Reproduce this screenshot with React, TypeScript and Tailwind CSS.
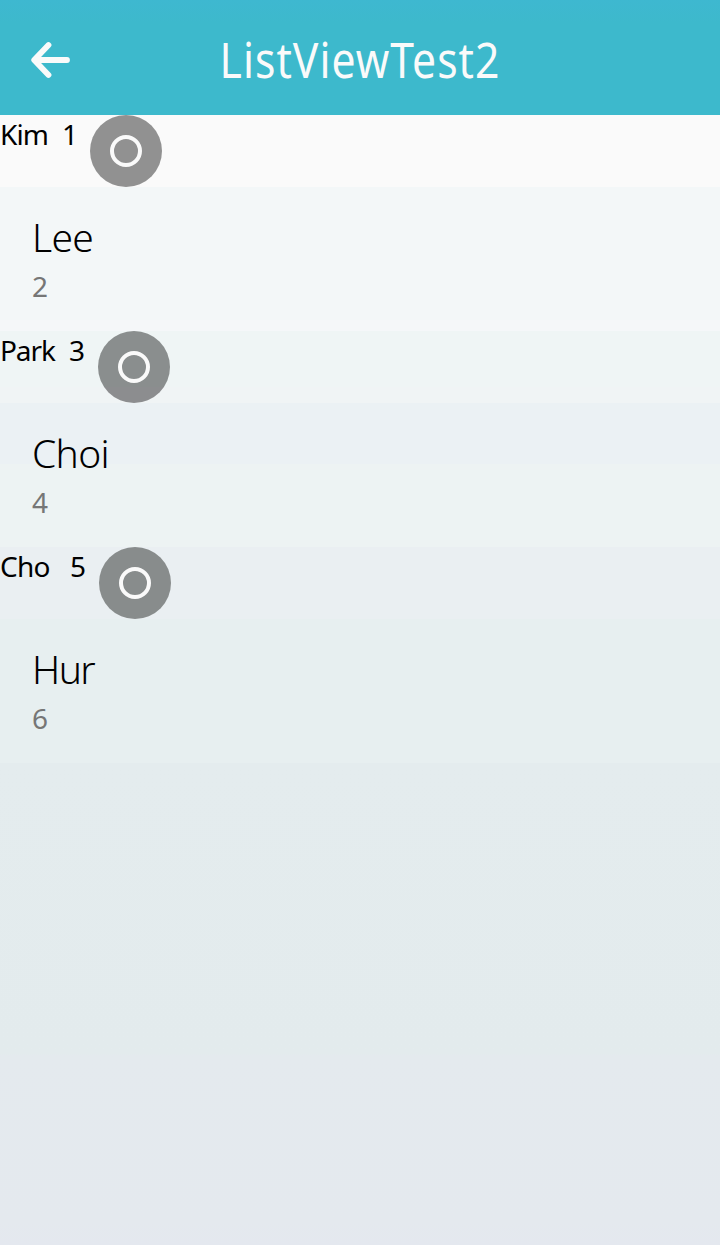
type Row = {
  name: string;
  value: string;
  nameWidth: string;
  valueWidth: string;
  tracking: string;
  background: string;
  disc: string;
};

const checkRow = (row: Row) => (
  <li key={row.name} className={`flex h-[72px] items-start ${row.background}`}>
    <span className={`mt-px whitespace-nowrap text-[28px] leading-9 text-black ${row.nameWidth} ${row.tracking}`}>{row.name}</span>
    <span className={`mt-px text-[28px] leading-9 text-black ${row.valueWidth}`}>{row.value}</span>
    <button
      aria-label={row.name}
      className={`flex size-[72px] shrink-0 items-center justify-center rounded-full ${row.disc}`}
    >
      <span className="size-8 rounded-full border-4 border-[#fafafa]" />
    </button>
  </li>
);

const detailRow = (row: Row) => (
  <li key={row.name} className={`flex h-36 flex-col items-start pl-8 pt-[25px] ${row.background}`}>
    <span className={`text-[39px] font-light leading-[50px] text-black ${row.tracking}`}>{row.name}</span>
    <span className="mt-1.5 text-[28px] leading-9 text-[#767676]">{row.value}</span>
  </li>
);

const rows: Row[] = [
  { name: "Kim", value: "1", nameWidth: "w-[62px]", valueWidth: "w-[28px]", tracking: "tracking-[-0.9px]", background: "bg-[#fafafa]", disc: "bg-[#919191]" },
  { name: "Lee", value: "2", nameWidth: "", valueWidth: "", tracking: "tracking-[-0.7px]", background: "bg-[linear-gradient(#f3f7f8_133px,#f5f7f9_133px)]", disc: "" },
  { name: "Park", value: "3", nameWidth: "w-[69px]", valueWidth: "w-[29px]", tracking: "tracking-[-1.1px]", background: "bg-[linear-gradient(#eff5f5_56px,#f0f4f5_56px)]", disc: "bg-[linear-gradient(#8a8e8e_56px,#8c8d8f_56px)]" },
  { name: "Choi", value: "4", nameWidth: "", valueWidth: "", tracking: "tracking-[-0.7px]", background: "bg-[linear-gradient(#ebf1f4_61px,#edf3f3_61px)]", disc: "" },
  { name: "Cho", value: "5", nameWidth: "w-[70px]", valueWidth: "w-[29px]", tracking: "tracking-[-0.8px]", background: "bg-[#eaeff2]", disc: "bg-[#888c8c]" },
  { name: "Hur", value: "6", nameWidth: "", valueWidth: "", tracking: "tracking-[-1.6px]", background: "bg-[#e7eff0]", disc: "" },
];

export default function App() {
  return (
    <div className="flex h-[1245px] w-[720px] flex-col overflow-hidden bg-[#e4ebed] font-['Noto_Sans',sans-serif]">
      <header className="grid h-[115px] grid-cols-[100px_1fr_100px] items-center bg-linear-to-b from-[#3eb8d0] to-[#3db9cc] to-20%">
        <button aria-label="Back" className="flex justify-center">
          <svg
            width="44"
            height="40"
            viewBox="0 0 44 40"
            fill="none"
            stroke="#fafafa"
            strokeWidth="5.8"
            strokeLinecap="round"
            strokeLinejoin="round"
            className="mt-1"
          >
            <path d="M20.5 5 6.2 20l14.3 15M7 20h32" />
          </svg>
        </button>
        <h1 className="mt-[3px] scale-x-[0.87] whitespace-nowrap text-center text-[49px] leading-none text-[#fafafa] tracking-[1.2px]">
          ListViewTest2
        </h1>
      </header>
      <ul className="flex flex-col">
        {rows.map((row, index) => (index % 2 === 0 ? checkRow(row) : detailRow(row)))}
      </ul>
      <div className="flex-1 bg-[linear-gradient(#e4ecee_0px,#e3ebed_290px,#e4eaee_292px,#e4e9ee_460px,#e4e8ef_482px)]" />
    </div>
  );
}
